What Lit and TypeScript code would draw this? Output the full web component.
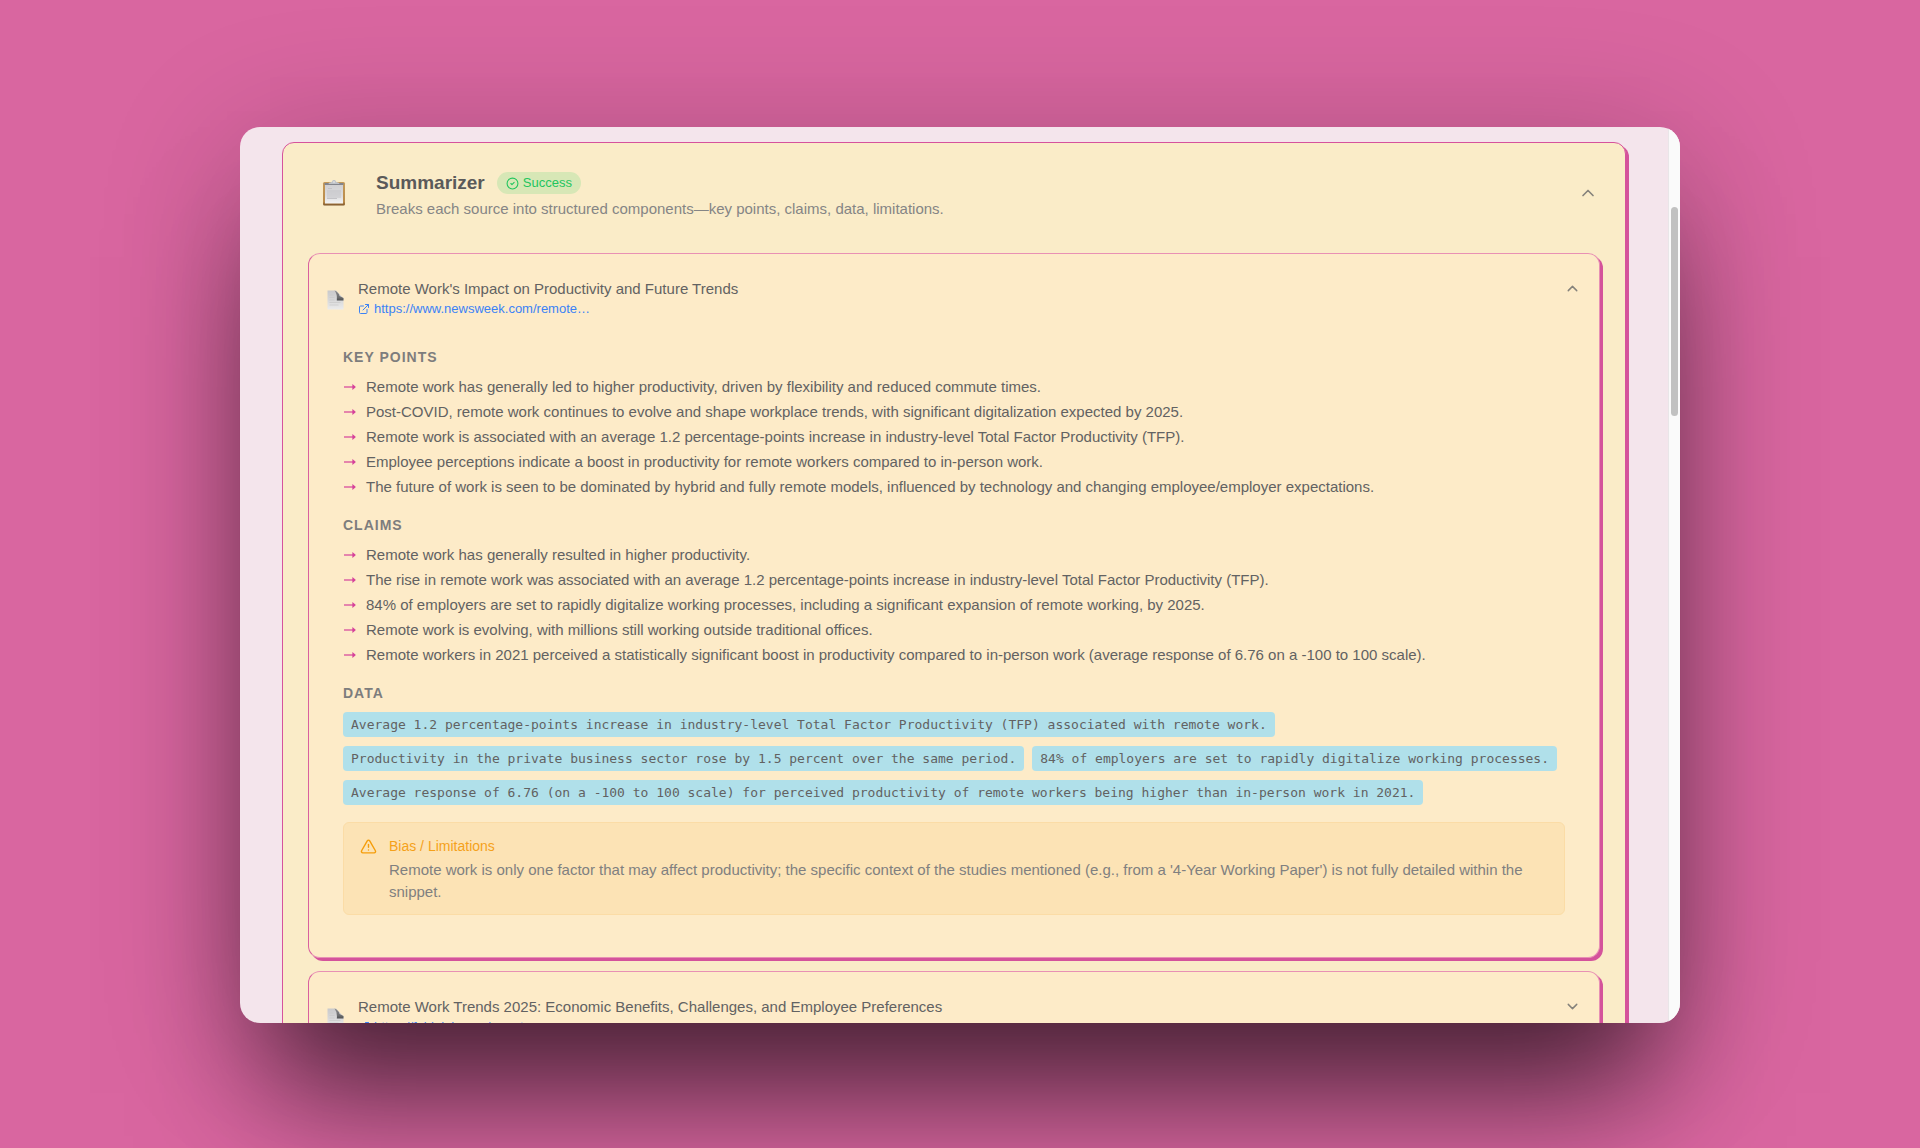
import { LitElement, html, css, svg, nothing } from "lit";
import { customElement, property } from "lit/decorators.js";

interface Source {
  title: string;
  url: string;
  open: boolean;
  keyPoints: string[];
  claims: string[];
  data: string[];
  limitations: string;
}

const SOURCES: Source[] = [
  {
    title: "Remote Work's Impact on Productivity and Future Trends",
    url: "https://www.newsweek.com/remote…",
    open: true,
    keyPoints: [
      "Remote work has generally led to higher productivity, driven by flexibility and reduced commute times.",
      "Post-COVID, remote work continues to evolve and shape workplace trends, with significant digitalization expected by 2025.",
      "Remote work is associated with an average 1.2 percentage-points increase in industry-level Total Factor Productivity (TFP).",
      "Employee perceptions indicate a boost in productivity for remote workers compared to in-person work.",
      "The future of work is seen to be dominated by hybrid and fully remote models, influenced by technology and changing employee/employer expectations.",
    ],
    claims: [
      "Remote work has generally resulted in higher productivity.",
      "The rise in remote work was associated with an average 1.2 percentage-points increase in industry-level Total Factor Productivity (TFP).",
      "84% of employers are set to rapidly digitalize working processes, including a significant expansion of remote working, by 2025.",
      "Remote work is evolving, with millions still working outside traditional offices.",
      "Remote workers in 2021 perceived a statistically significant boost in productivity compared to in-person work (average response of 6.76 on a -100 to 100 scale).",
    ],
    data: [
      "Average 1.2 percentage-points increase in industry-level Total Factor Productivity (TFP) associated with remote work.",
      "Productivity in the private business sector rose by 1.5 percent over the same period.",
      "84% of employers are set to rapidly digitalize working processes.",
      "Average response of 6.76 (on a -100 to 100 scale) for perceived productivity of remote workers being higher than in-person work in 2021.",
    ],
    limitations:
      "Remote work is only one factor that may affect productivity; the specific context of the studies mentioned (e.g., from a '4-Year Working Paper') is not fully detailed within the snippet.",
  },
  {
    title: "Remote Work Trends 2025: Economic Benefits, Challenges, and Employee Preferences",
    url: "https://fairleigh.com/remote-wor…",
    open: false,
    keyPoints: [],
    claims: [],
    data: [],
    limitations: "",
  },
];

const stroked = (size: number, body: unknown) => html`
  <svg width=${size} height=${size} viewBox="0 0 24 24" fill="none" stroke="currentColor"
    stroke-width="2" stroke-linecap="round" stroke-linejoin="round" aria-hidden="true">${body}</svg>`;

const chevron = (size: number, up: boolean) =>
  stroked(size, up ? svg`<path d="m18 15-6-6-6 6"/>` : svg`<path d="m6 9 6 6 6-6"/>`);

const circleCheck = stroked(13, svg`<circle cx="12" cy="12" r="10"/><path d="m9 12 2 2 4-4"/>`);

const externalLink = stroked(
  12,
  svg`<path d="M15 3h6v6"/><path d="M10 14 21 3"/><path d="M18 13v6a2 2 0 0 1-2 2H5a2 2 0 0 1-2-2V8a2 2 0 0 1 2-2h6"/>`,
);

const warning = stroked(
  17,
  svg`<path d="m21.73 18-8-14a2 2 0 0 0-3.48 0l-8 14A2 2 0 0 0 4 21h16a2 2 0 0 0 1.73-3"/><path d="M12 9v4"/><path d="M12 17h.01"/>`,
);

const arrow = html`
  <svg width="12" height="6" viewBox="0 0 12 6" aria-hidden="true">
    <path d="M0 3h10" stroke="currentColor" stroke-width="1.200" fill="none"/>
    <path d="M8.400 0.100 11.900 3 8.400 5.900Z" fill="currentColor"/>
  </svg>`;

const clipboard = html`
  <svg width="24" height="26" viewBox="0 0 24 26" aria-hidden="true">
    <defs>
      <linearGradient id="sheet" x1="0" y1="0" x2="0" y2="1">
        <stop offset="0" stop-color="#cfcfd1"/><stop offset="0.600" stop-color="#dcdcde"/><stop offset="1" stop-color="#f4f4f4"/>
      </linearGradient>
      <linearGradient id="board" x1="0" y1="0" x2="0" y2="1">
        <stop offset="0" stop-color="#c59a58"/><stop offset="0.850" stop-color="#b98b4b"/><stop offset="1" stop-color="#7a5228"/>
      </linearGradient>
    </defs>
    <rect x="1" y="2" width="22" height="23.500" rx="1.500" fill="url(#board)"/>
    <rect x="3" y="4" width="18" height="19.500" fill="url(#sheet)"/>
    <path d="M6 8.500h4M5 11h14M5 13h14M5 15h14M5 17h14M5 18.500h10" stroke="#c3c3c7" stroke-width="1.200"/>
    <path d="M2.500 3h19v2h-19z" fill="#83858c"/>
    <path d="M6.500 4c0-1.700 2-1.500 3.500-2.200 0-2.400 4-2.400 4 0 1.500 0.700 3.500 0.500 3.500 2.200z" fill="#bfc3c8"/>
    <circle cx="12" cy="2" r="0.800" fill="#eef0ee"/>
  </svg>`;

const pageIcon = html`
  <svg width="17" height="20" viewBox="0 0 17 20" aria-hidden="true">
    <defs>
      <linearGradient id="paper" x1="0" y1="0" x2="0" y2="1">
        <stop offset="0" stop-color="#c9c9cb"/><stop offset="0.500" stop-color="#d8d8d9"/><stop offset="1" stop-color="#ececec"/>
      </linearGradient>
      <linearGradient id="fold" x1="0.500" y1="0" x2="0.500" y2="1">
        <stop offset="0" stop-color="#8b8b8b"/><stop offset="0.700" stop-color="#6c6d6e"/><stop offset="1" stop-color="#4e5052"/>
      </linearGradient>
    </defs>
    <path d="M0.500 0.500H9L16.500 8.500v11H0.500z" fill="url(#paper)"/>
    <path d="M2.500 5h4M2.500 7.500h5M2.500 10h5M2.500 12.500h11M2.500 15h9" stroke="#c9c9c9" stroke-width="0.700"/>
    <path d="M7.500 0.500 Q12 2.500 12.500 6 L16.500 8v2.500H9.800Q10.500 4 7.500 0.500z" fill="url(#fold)"/>
  </svg>`;

@customElement("source-card")
export class SourceCard extends LitElement {
  @property({ attribute: false }) source!: Source;
  @property({ type: Boolean }) expanded = false;

  static styles = css`
    :host {
      display: block;
      box-sizing: border-box;
      padding: 24px 18px 42px;
      border: 1px solid #e890b4;
      border-left-color: #d9609f;
      border-radius: 12px;
      background: #fdebc8;
      box-shadow: 3px 3px 0 #d4539b;
    }
    .head {
      display: flex;
      align-items: flex-start;
    }
    .icon {
      flex: none;
      display: flex;
      padding-top: 12px;
      width: 31px;
    }
    .text {
      flex: 1;
      min-width: 0;
      display: flex;
      flex-direction: column;
      align-items: flex-start;
    }
    h3 {
      margin: 0;
      font-size: 15px;
      line-height: 22px;
      font-weight: 400;
      color: #626262;
    }
    a {
      display: flex;
      align-items: center;
      gap: 4px;
      font-size: 13px;
      line-height: 18px;
      color: #3b82f6;
      text-decoration: none;
    }
    button {
      flex: none;
      display: flex;
      margin: 2px 0 0;
      padding: 0;
      border: 0;
      background: none;
      color: #85827b;
      cursor: pointer;
    }
    .body {
      padding: 28px 16px 0;
    }
    h4 {
      margin: 0 0 6px;
      font-size: 14px;
      line-height: 22px;
      font-weight: 700;
      letter-spacing: 1px;
      text-transform: uppercase;
      color: #7d7d7d;
    }
    ul {
      margin: 0 0 15px;
      padding: 0;
      list-style: none;
    }
    .points li {
      display: flex;
      align-items: center;
      gap: 10px;
      padding-left: 1px;
      font-size: 15px;
      line-height: 25px;
      color: #626262;
    }
    .points svg {
      flex: none;
      color: #d6409a;
    }
    .data {
      display: flex;
      flex-wrap: wrap;
      gap: 9px 8px;
      margin: 8px 0 17px;
    }
    .data li {
      padding: 0 8px;
      border-radius: 4px;
      background: #b0e0ea;
      font-family: "DejaVu Sans Mono", "Liberation Mono", monospace;
      font-size: 13px;
      line-height: 25px;
      color: #626262;
    }
    .note {
      display: flex;
      gap: 12px;
      padding: 12px 17px 11px 16px;
      border: 1px solid #fbdca6;
      border-radius: 6px;
      background: #fce3b5;
    }
    .note svg {
      flex: none;
      margin-top: 3px;
      color: #f59e0b;
    }
    .note h5,
    .note p {
      margin: 0;
      font-size: 15px;
      line-height: 22px;
      font-weight: 400;
      color: #808080;
    }
    .note h5 {
      margin-bottom: 2px;
      font-size: 14px;
      color: #f5a11a;
    }
  `;

  private list(heading: string, items: string[]) {
    return html`
      <h4>${heading}</h4>
      <ul class="points">
        ${items.map((item) => html`<li>${arrow}<span>${item}</span></li>`)}
      </ul>`;
  }

  private toggle() {
    this.expanded = !this.expanded;
  }

  render() {
    const s = this.source;
    const open = this.expanded && s.keyPoints.length > 0;
    return html`
      <header class="head">
        <span class="icon">${pageIcon}</span>
        <div class="text">
          <h3>${s.title}</h3>
          <a href="#source">${externalLink}<span>${s.url}</span></a>
        </div>
        <button type="button" aria-label="Toggle source" aria-expanded=${open} @click=${this.toggle}>
          ${chevron(17, open)}
        </button>
      </header>
      ${open
        ? html`
            <div class="body">
              ${this.list("Key points", s.keyPoints)}
              ${this.list("Claims", s.claims)}
              <h4>Data</h4>
              <ul class="data">${s.data.map((d) => html`<li>${d}</li>`)}</ul>
              <aside class="note">
                ${warning}
                <div>
                  <h5>Bias / Limitations</h5>
                  <p>${s.limitations}</p>
                </div>
              </aside>
            </div>`
        : nothing}
    `;
  }
}

@customElement("app-root")
export class AppRoot extends LitElement {
  static styles = css`
    :host {
      display: flex;
      box-sizing: border-box;
      height: 100vh;
      padding: 127px 12.5% 125px;
      overflow: hidden;
      background: #d966a0;
      font-family: "Liberation Sans", Arial, sans-serif;
    }
    .window {
      flex: 1;
      min-width: 0;
      display: flex;
      overflow: hidden;
      border-radius: 20px;
      background: #f4e5ec;
      box-shadow: 0 100px 120px -30px rgba(0, 0, 0, 0.6), 0 20px 140px rgba(0, 0, 0, 0.22);
    }
    .view {
      flex: 1;
      min-width: 0;
      overflow: hidden;
      padding: 15px 42px 0;
    }
    .track {
      flex: none;
      box-sizing: border-box;
      width: 12px;
      padding: 80px 2px 0;
      border-left: 1px solid #e9e6e8;
      background: #fafafa;
    }
    .thumb {
      width: 7px;
      height: 209px;
      border-radius: 4px;
      background: #c1c1c1;
    }
    .panel {
      padding: 26px 25px 25px;
      border: 1px solid #d6529c;
      border-radius: 12px;
      background: #faecc8;
      box-shadow: 3px 3px 0 #d4539b;
    }
    .head {
      display: flex;
      align-items: flex-start;
      padding: 0 2px 0 14px;
      margin-bottom: 33px;
    }
    .icon {
      flex: none;
      display: flex;
      width: 54px;
      padding-top: 11px;
    }
    .text {
      flex: 1;
      min-width: 0;
    }
    .row {
      display: flex;
      align-items: center;
      gap: 12px;
    }
    h2 {
      margin: 0;
      font-size: 19px;
      line-height: 28px;
      font-weight: 700;
      color: #5a5a5a;
    }
    .badge {
      display: flex;
      align-items: center;
      gap: 4px;
      padding: 0 9px;
      border-radius: 12px;
      background: #d7e7b6;
      font-size: 13px;
      line-height: 22px;
      color: #22c55e;
    }
    .text p {
      margin: 0;
      font-size: 15px;
      line-height: 23px;
      color: #858585;
    }
    button {
      flex: none;
      display: flex;
      padding: 14px 0 0;
      border: 0;
      background: none;
      color: #85827b;
      cursor: pointer;
    }
    .cards {
      display: flex;
      flex-direction: column;
      gap: 13px;
    }
  `;

  render() {
    return html`
      <div class="window">
        <main class="view">
          <section class="panel">
            <header class="head">
              <span class="icon">${clipboard}</span>
              <div class="text">
                <div class="row">
                  <h2>Summarizer</h2>
                  <span class="badge">${circleCheck}Success</span>
                </div>
                <p>Breaks each source into structured components—key points, claims, data, limitations.</p>
              </div>
              <button type="button" aria-label="Collapse summarizer" aria-expanded="true">
                ${chevron(20, true)}
              </button>
            </header>
            <div class="cards">
              ${SOURCES.map((s) => html`<source-card .source=${s} ?expanded=${s.open}></source-card>`)}
            </div>
          </section>
        </main>
        <div class="track"><div class="thumb"></div></div>
      </div>
    `;
  }
}
